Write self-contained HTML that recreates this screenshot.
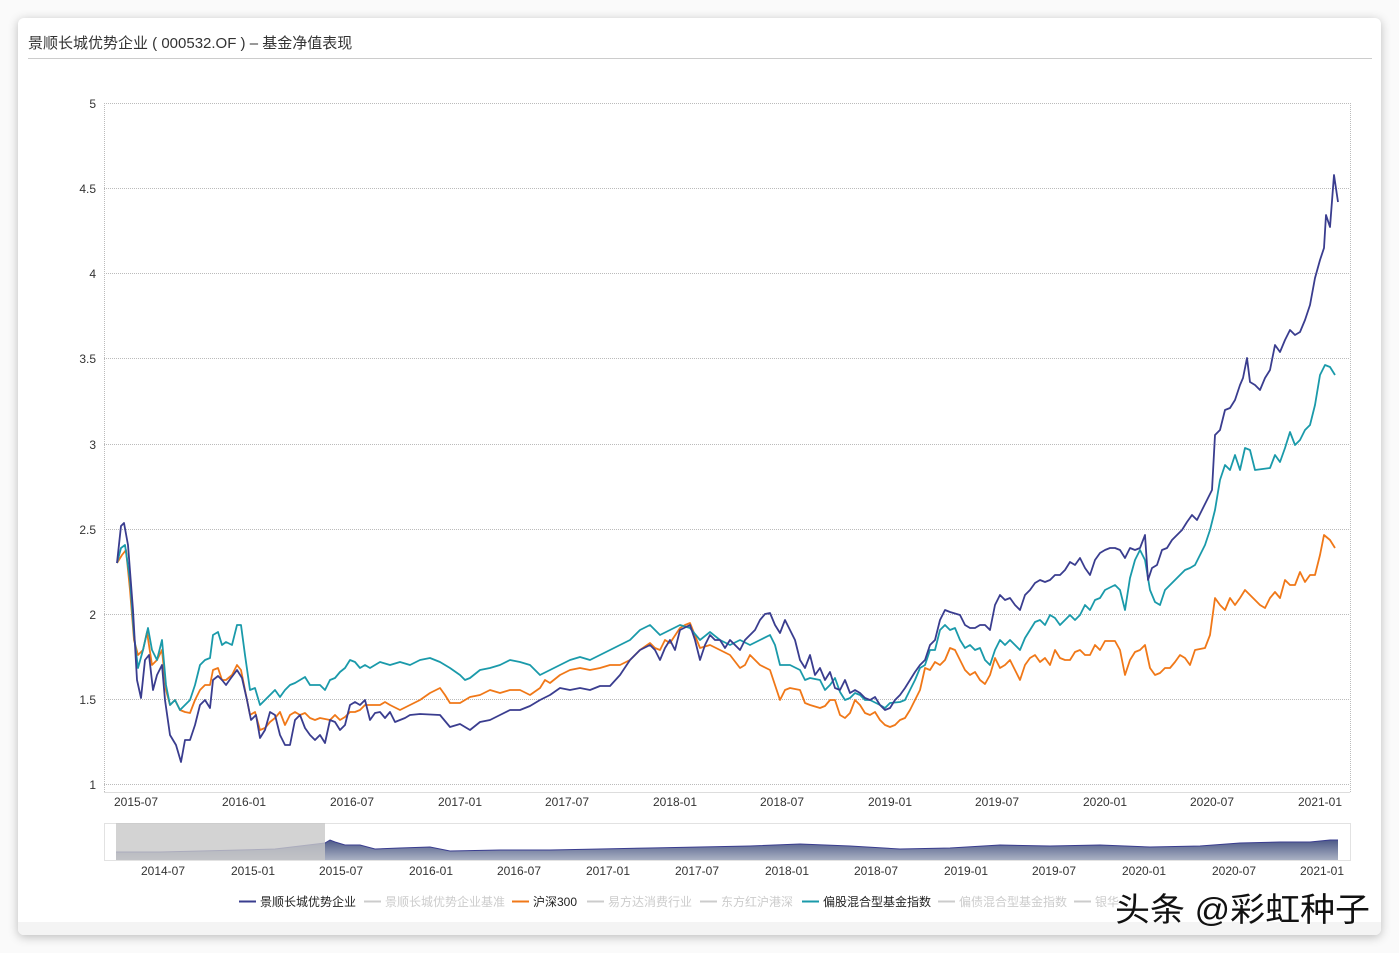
<!DOCTYPE html><html><head><meta charset="utf-8"><style>
html,body{margin:0;padding:0;width:1399px;height:953px;background:#fafafa;overflow:hidden;font-family:"Liberation Sans","Noto Sans CJK SC",sans-serif}
.card{position:absolute;left:18px;top:18px;width:1363px;height:917px;background:#fff;border-radius:6px;box-shadow:0 2px 10px rgba(0,0,0,.25)}
.title{position:absolute;left:28px;top:32px;font-size:15px;color:#333}
.hr{position:absolute;left:28px;top:58px;width:1344px;height:1px;background:#ccc}
.foot{position:absolute;left:18px;top:922px;width:1363px;height:13px;background:#f4f4f4;border-radius:0 0 6px 6px}
svg text{font-family:"Liberation Sans","Noto Sans CJK SC",sans-serif}
</style></head><body>
<div class="card"></div><div class="foot"></div>
<div class="title">景顺长城优势企业 ( 000532.OF ) – 基金净值表现</div>
<div class="hr"></div>
<svg width="1399" height="953" style="position:absolute;left:0;top:0">
<defs><linearGradient id="g" x1="0" y1="0" x2="0" y2="1"><stop offset="0" stop-color="#4d5a88"/><stop offset="1" stop-color="#aab1c4"/></linearGradient></defs>
<g stroke="#bbb" stroke-dasharray="1,1" stroke-width="1">
<line x1="104" y1="103.5" x2="1350" y2="103.5"/><line x1="104" y1="188.5" x2="1350" y2="188.5"/><line x1="104" y1="273.5" x2="1350" y2="273.5"/><line x1="104" y1="358.5" x2="1350" y2="358.5"/><line x1="104" y1="444.5" x2="1350" y2="444.5"/><line x1="104" y1="529.5" x2="1350" y2="529.5"/><line x1="104" y1="614.5" x2="1350" y2="614.5"/><line x1="104" y1="699.5" x2="1350" y2="699.5"/><line x1="104" y1="784.5" x2="1350" y2="784.5"/>
<line x1="104.5" y1="103" x2="104.5" y2="792"/><line x1="1350.5" y1="103" x2="1350.5" y2="792"/>
</g>
<line x1="104" y1="792.5" x2="1350" y2="792.5" stroke="#ddd"/>
<g font-size="12" fill="#333" text-anchor="end">
<text x="96" y="108">5</text><text x="96" y="193">4.5</text><text x="96" y="278">4</text><text x="96" y="363">3.5</text><text x="96" y="449">3</text><text x="96" y="534">2.5</text><text x="96" y="619">2</text><text x="96" y="704">1.5</text><text x="96" y="789">1</text>
</g>
<g font-size="12" fill="#333" text-anchor="middle">
<text x="136" y="806">2015-07</text><text x="244" y="806">2016-01</text><text x="352" y="806">2016-07</text><text x="460" y="806">2017-01</text><text x="567" y="806">2017-07</text><text x="675" y="806">2018-01</text><text x="782" y="806">2018-07</text><text x="890" y="806">2019-01</text><text x="997" y="806">2019-07</text><text x="1105" y="806">2020-01</text><text x="1212" y="806">2020-07</text><text x="1320" y="806">2021-01</text>
</g>
<g fill="none" stroke-width="1.8" stroke-linejoin="round">
<polyline stroke="#f07818" points="117,563 122,555 126,550 130,590 134,640 138,655 143,650 147,632 152,665 157,660 162,650 166,690 170,705 175,700 180,710 185,712 190,713 195,700 200,690 205,685 210,685 213,670 218,668 222,680 226,680 232,675 237,665 241,670 245,690 250,715 255,712 260,730 265,728 270,722 275,718 280,712 285,725 290,715 295,712 300,715 305,713 310,718 315,720 320,718 330,720 335,715 340,720 345,717 350,712 355,712 360,710 365,705 370,705 380,705 385,702 390,705 400,710 410,705 420,700 430,693 440,688 445,695 450,703 460,703 470,697 480,695 490,690 500,693 510,690 520,690 530,695 540,688 545,680 550,683 560,675 570,670 580,668 590,670 600,668 610,665 620,665 630,660 640,650 650,643 655,648 660,650 665,640 670,643 680,628 685,625 690,623 700,648 710,645 720,650 730,655 740,668 745,665 750,655 760,665 770,670 775,685 780,700 785,690 790,688 800,690 805,703 810,705 820,708 825,706 830,700 835,700 840,715 845,718 850,713 855,700 860,705 865,713 870,715 875,712 880,720 885,725 890,727 895,725 900,720 905,718 910,710 915,700 920,690 925,668 930,670 935,662 940,665 945,660 950,648 955,650 960,660 965,670 970,675 975,672 980,680 985,684 990,675 995,658 1000,668 1005,665 1010,660 1015,670 1020,680 1025,665 1030,658 1035,655 1040,662 1045,658 1050,665 1055,650 1060,658 1065,660 1070,660 1075,652 1080,650 1085,655 1090,655 1095,645 1100,650 1105,641 1115,641 1120,650 1125,675 1130,660 1135,652 1140,650 1145,645 1150,668 1155,675 1160,673 1165,668 1170,668 1175,662 1180,655 1185,658 1190,665 1195,650 1205,648 1210,635 1215,598 1220,605 1225,610 1230,598 1235,605 1240,598 1245,590 1250,595 1255,600 1260,605 1265,608 1270,598 1275,592 1280,598 1285,580 1290,585 1295,585 1300,572 1305,582 1310,575 1315,575 1320,555 1324,535 1330,540 1335,548"/>
<polyline stroke="#1a9aaa" points="117,563 121,548 125,545 130,580 134,635 138,668 143,650 148,628 152,650 157,660 162,640 166,685 170,705 175,700 180,710 185,705 190,700 195,685 200,665 205,660 210,658 213,635 218,632 222,645 226,642 232,645 237,625 241,625 245,655 250,690 255,688 260,705 265,700 270,695 275,690 280,697 285,690 290,685 295,683 300,680 305,677 310,685 320,685 325,690 330,680 335,678 340,672 345,668 350,660 355,662 360,668 365,665 370,668 375,665 380,662 390,665 400,662 410,665 420,660 430,658 440,662 450,668 460,675 465,680 470,678 480,670 490,668 500,665 510,660 520,662 530,665 540,675 550,670 560,665 570,660 580,657 590,660 600,655 610,650 620,645 630,640 640,630 650,625 660,635 670,630 680,625 690,628 700,640 710,632 720,640 730,645 740,640 750,645 760,640 770,635 775,645 780,665 790,665 800,670 805,680 810,678 820,680 825,690 830,685 835,678 840,692 845,700 850,698 855,693 860,695 865,700 870,700 880,705 885,708 890,703 900,702 905,700 910,690 915,680 920,668 925,665 930,650 935,650 940,630 945,625 950,630 955,628 960,640 965,648 970,645 975,650 980,648 985,660 990,665 995,650 1000,640 1005,645 1010,640 1015,645 1020,650 1025,638 1030,630 1035,622 1040,620 1045,625 1050,615 1055,618 1060,625 1065,620 1070,615 1075,620 1080,615 1085,605 1090,610 1095,600 1100,598 1105,590 1115,585 1120,590 1125,610 1130,578 1135,560 1140,550 1145,560 1150,590 1155,602 1160,605 1165,590 1170,585 1175,580 1180,575 1185,570 1190,568 1195,565 1200,555 1205,545 1210,530 1215,510 1220,480 1225,465 1230,470 1235,455 1240,470 1245,448 1250,450 1255,470 1270,468 1275,455 1280,462 1285,448 1290,432 1295,445 1300,440 1305,430 1310,425 1315,405 1320,375 1325,365 1330,367 1335,375"/>
<polyline stroke="#3a3d8f" points="117,563 121,526 124,523 128,545 133,610 137,680 141,698 145,660 149,655 153,690 157,675 162,665 165,700 170,735 176,745 181,762 185,740 190,740 195,725 200,705 205,700 210,708 213,680 218,676 222,680 226,685 231,678 237,670 242,678 247,700 251,720 256,715 260,738 265,730 270,712 275,715 280,735 285,745 290,745 295,720 300,715 305,728 310,735 315,740 320,735 325,743 330,720 335,722 340,730 345,725 350,705 355,702 360,705 365,700 370,720 375,713 380,712 385,718 390,712 395,722 400,720 405,718 410,715 420,714 440,715 450,727 460,724 470,730 480,722 490,720 500,715 510,710 520,710 530,706 540,700 550,695 560,688 570,690 580,688 590,690 600,686 610,686 620,675 630,660 640,650 650,645 655,650 660,660 665,648 670,640 675,650 680,630 690,625 695,640 700,660 705,645 710,635 715,640 720,640 725,648 730,640 735,645 740,650 745,640 750,635 755,630 760,620 765,614 770,613 775,625 780,633 785,620 790,630 795,640 800,660 805,668 810,655 815,675 820,668 825,680 830,672 835,688 840,690 845,680 850,693 855,690 860,693 865,698 870,700 875,697 880,705 885,710 890,708 895,700 900,695 905,688 910,680 915,672 920,665 925,660 930,645 935,640 940,620 945,610 950,612 960,615 965,625 970,628 975,628 980,625 985,625 990,630 995,605 1000,595 1005,600 1010,598 1015,605 1020,610 1025,595 1030,590 1035,583 1040,580 1045,582 1050,580 1055,575 1060,575 1065,570 1070,562 1075,565 1080,558 1085,568 1090,575 1095,560 1100,553 1105,550 1110,548 1115,548 1120,550 1125,558 1130,548 1135,550 1140,548 1145,535 1148,580 1152,568 1157,565 1162,550 1167,548 1172,540 1177,535 1182,530 1187,522 1192,515 1197,520 1202,510 1207,500 1212,490 1215,435 1220,430 1225,410 1230,408 1235,400 1240,385 1243,378 1247,358 1250,382 1255,385 1260,390 1265,378 1270,370 1275,345 1280,352 1285,340 1290,330 1295,335 1300,332 1305,320 1310,305 1315,278 1320,260 1324,248 1326,215 1330,227 1334,175 1338,202"/>
</g>
<rect x="104.5" y="823.5" width="1246" height="37" fill="none" stroke="#e2e2e2"/>
<path d="M116,852 L160,852 L200,851 L240,850 L275,849 L300,846 L325,843 L330,840 L335,842 L345,845 L360,845 L375,849 L400,848 L430,847 L450,851 L500,850 L550,850 L600,849 L650,848 L700,847 L750,846 L800,844 L850,846 L900,849 L950,848 L1000,845 L1050,846 L1100,845 L1150,847 L1200,846 L1240,843 L1280,842 L1310,842 L1330,840 L1338,840 L1338,860 L116,860 Z" fill="url(#g)"/>
<path d="M116,852 L160,852 L200,851 L240,850 L275,849 L300,846 L325,843 L330,840 L335,842 L345,845 L360,845 L375,849 L400,848 L430,847 L450,851 L500,850 L550,850 L600,849 L650,848 L700,847 L750,846 L800,844 L850,846 L900,849 L950,848 L1000,845 L1050,846 L1100,845 L1150,847 L1200,846 L1240,843 L1280,842 L1310,842 L1330,840 L1338,840" fill="none" stroke="#3a3d8f" stroke-width="1"/>
<rect x="116" y="823" width="209" height="37" fill="#c8c8c8" fill-opacity="0.8"/>
<g font-size="12" fill="#333" text-anchor="middle">
<text x="163" y="875">2014-07</text><text x="253" y="875">2015-01</text><text x="341" y="875">2015-07</text><text x="431" y="875">2016-01</text><text x="519" y="875">2016-07</text><text x="608" y="875">2017-01</text><text x="697" y="875">2017-07</text><text x="787" y="875">2018-01</text><text x="876" y="875">2018-07</text><text x="966" y="875">2019-01</text><text x="1054" y="875">2019-07</text><text x="1144" y="875">2020-01</text><text x="1234" y="875">2020-07</text><text x="1322" y="875">2021-01</text>
</g>
<g font-size="12">
<line x1="239" y1="901.5" x2="256" y2="901.5" stroke="#3a3d8f" stroke-width="2"/><text x="260" y="906" fill="#222">景顺长城优势企业</text>
<line x1="364" y1="901.5" x2="381" y2="901.5" stroke="#ccc" stroke-width="2"/><text x="385" y="906" fill="#ccc">景顺长城优势企业基准</text>
<line x1="512" y1="901.5" x2="529" y2="901.5" stroke="#f07818" stroke-width="2"/><text x="533" y="906" fill="#222">沪深300</text>
<line x1="587" y1="901.5" x2="604" y2="901.5" stroke="#ccc" stroke-width="2"/><text x="608" y="906" fill="#ccc">易方达消费行业</text>
<line x1="700" y1="901.5" x2="717" y2="901.5" stroke="#ccc" stroke-width="2"/><text x="721" y="906" fill="#ccc">东方红沪港深</text>
<line x1="802" y1="901.5" x2="819" y2="901.5" stroke="#1a9aaa" stroke-width="2"/><text x="823" y="906" fill="#222">偏股混合型基金指数</text>
<line x1="938" y1="901.5" x2="955" y2="901.5" stroke="#ccc" stroke-width="2"/><text x="959" y="906" fill="#ccc">偏债混合型基金指数</text>
<line x1="1074" y1="901.5" x2="1091" y2="901.5" stroke="#ccc" stroke-width="2"/><text x="1095" y="906" fill="#ccc">银华</text>
</g>
<text x="1115" y="921" font-size="33" fill="#111" stroke="#fff" stroke-width="0.6" paint-order="stroke" textLength="255" lengthAdjust="spacingAndGlyphs">头条 @彩虹种子</text>
</svg>
</body></html>
